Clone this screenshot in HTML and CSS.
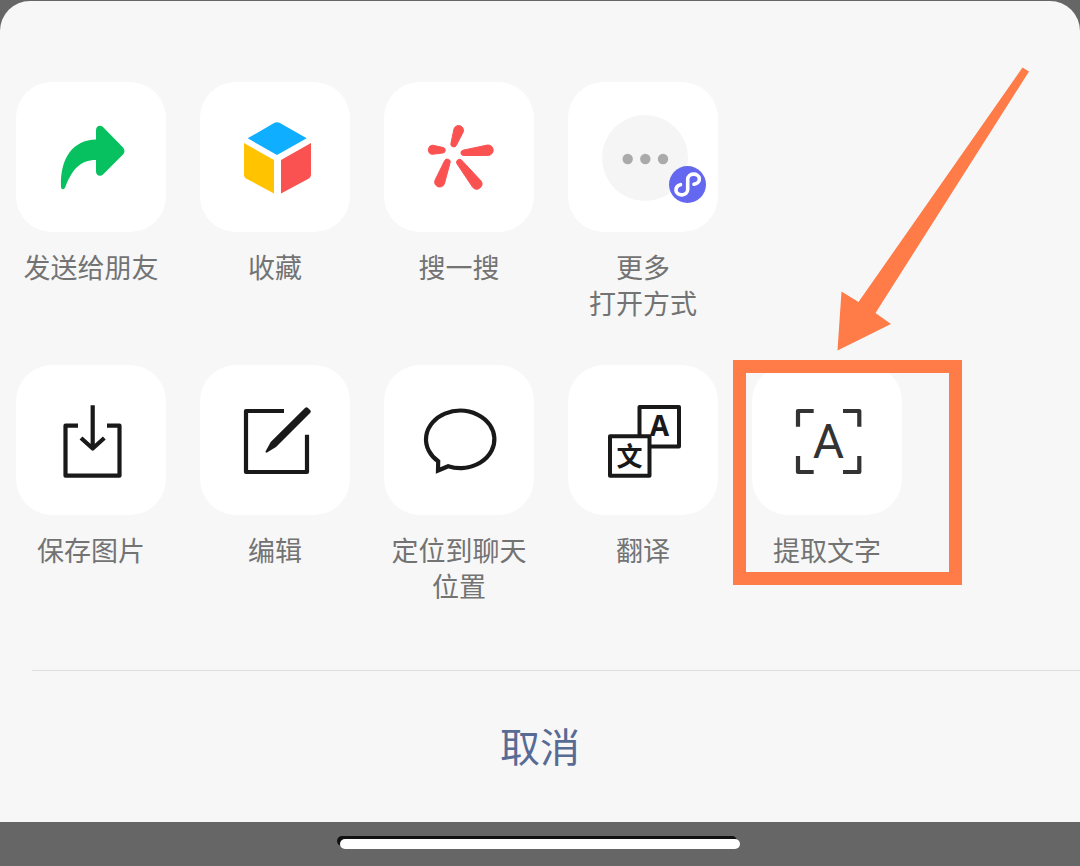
FILE: index.html
```html
<!DOCTYPE html>
<html lang="zh-CN">
<head>
    <meta charset="UTF-8">
    <meta name="viewport" content="width=device-width, initial-scale=1.0">
    <title>图片操作</title>
    <link rel="stylesheet" href="styles.css">
</head>
<body>

<main class="sheet">
    <div class="actions">
        <!-- Partage -->
        <div class="row">
            <button class="action" type="button">
                <span class="tile">
                    <svg viewBox="0 0 150 150" aria-hidden="true">
                        <path fill="#07c160" d="M80 57.500V48c0-4.300 4.500-5.500 7-3L107 65.500c2 2 2 5 0 7L87 92.500c-2.500 2.500-7 1.200-7-3V78C64 78 56 88 49.500 104.500C48.500 108 45 108 45 104.500C44 76 57 58 80 57.500Z"/>
                    </svg>
                </span>
                <span class="label">发送给朋友</span>
            </button>
            <button class="action" type="button">
                <span class="tile">
                    <svg viewBox="0 0 150 150" aria-hidden="true">
                        <path fill="#10aeff" d="M47.700 56.300L74.500 40.800q2.500-1.300 5 0L106.700 56.300L77 73Z"/>
                        <path fill="#ffc300" d="M44 61L74 78V111.500L46 96.500q-2-1.200-2-3.500Z"/>
                        <path fill="#fa5151" d="M81 78L111 61V92q0 3.500-3 5L81 111.500Z"/>
                    </svg>
                </span>
                <span class="label">收藏</span>
            </button>
            <button class="action" type="button">
                <span class="tile">
                    <svg viewBox="0 0 150 150" aria-hidden="true">
                        <g fill="#fa5151" stroke="#fa5151" stroke-linejoin="round">
                            <path d="M79.200 50A4.800 4.800 0 0 0 70 46.800L67 61A2.700 2.700 0 0 0 72.500 63Z"/>
                            <path d="M48 72.300A4.600 4.600 0 0 1 48.600 63.200L59.200 65.500A2.800 2.800 0 0 1 58.800 71Z"/>
                            <path d="M104.500 73.400A5.200 5.200 0 0 0 103.500 63L79 68.200A2.700 2.700 0 0 0 79.300 73.500Z"/>
                            <path d="M97.100 99A5.300 5.300 0 0 1 88.900 105.600L72.800 81.500A3 3 0 0 1 77.500 78Z"/>
                            <path d="M60.400 101.800A5 5 0 0 1 51 98.200L60.500 78.900A2.800 2.800 0 0 1 66 81.100Z"/>
                        </g>
                    </svg>
                </span>
                <span class="label">搜一搜</span>
            </button>
            <button class="action" type="button">
                <span class="tile">
                    <svg viewBox="0 0 150 150" aria-hidden="true">
                        <circle cx="77" cy="76" r="43" fill="#f5f5f5"/>
                        <g fill="#aaa">
                            <circle cx="59.700" cy="77" r="5.200"/>
                            <circle cx="77.300" cy="77" r="5.200"/>
                            <circle cx="95" cy="77" r="5.200"/>
                        </g>
                        <circle cx="119.500" cy="102.500" r="18.500" fill="#6467ef"/>
                        <path fill="none" stroke="#fff" stroke-width="3.600" stroke-linecap="round" d="M126 102.300C130 101.500 131.500 99 131.300 96.500C130.800 90.500 119.700 90.500 119.700 97.500V107.500C119.700 114.500 108.500 114.500 108 108.500C107.800 106 109.300 103.500 112.500 102.700"/>
                    </svg>
                </span>
                <span class="label">更多<br>打开方式</span>
            </button>
        </div>

        <!-- Outils -->
        <div class="row">
            <button class="action" type="button">
                <span class="tile">
                    <svg viewBox="0 0 150 150" aria-hidden="true">
                        <g fill="none" stroke="#191919" stroke-width="4.200" stroke-linejoin="round">
                            <path d="M62 60.700H49.500V110.700H103.500V60.700H91"/>
                            <path d="M76.700 40.300V83M65 73L76.700 83.500L88.300 73"/>
                        </g>
                    </svg>
                </span>
                <span class="label">保存图片</span>
            </button>
            <button class="action" type="button">
                <span class="tile">
                    <svg viewBox="0 0 150 150" aria-hidden="true">
                        <path fill="none" stroke="#191919" stroke-width="4.200" stroke-linejoin="round" d="M84 46H46V107H107V69.700"/>
                        <path fill="#191919" d="M65.500 86.500L70.700 77L105 43q1.500-1.500 3 0L110.300 45.300q1.200 1.200 0 2.500L76 82L67 87.500q-1.500.5-1.500-1Z"/>
                    </svg>
                </span>
                <span class="label">编辑</span>
            </button>
            <button class="action" type="button">
                <span class="tile">
                    <svg viewBox="0 0 150 150" aria-hidden="true">
                        <path fill="none" stroke="#191919" stroke-width="4.200" stroke-linejoin="miter" d="M64.200 101.200L54 105.500L54.200 96.300A34.200 28.700 0 1 1 64.200 101.200Z"/>
                    </svg>
                </span>
                <span class="label">定位到聊天位置</span>
            </button>
            <button class="action" type="button">
                <span class="tile">
                    <svg viewBox="0 0 150 150" aria-hidden="true">
                        <rect class="glyph-box" x="71.500" y="42" width="39.500" height="39.500"/>
                        <text class="glyph-latin" x="91.500" y="71">A</text>
                        <rect class="glyph-box" x="42" y="71.300" width="39.500" height="39.500"/>
                        <text class="glyph-han" x="61.500" y="101">文</text>
                    </svg>
                </span>
                <span class="label">翻译</span>
            </button>
            <div class="spotlight">
                <button class="action" type="button">
                    <span class="tile">
                        <svg viewBox="0 0 150 150" aria-hidden="true">
                            <path fill="none" stroke="#333" stroke-width="4.200" stroke-linejoin="round" d="M46 61.700V46H61.700M91 46H107.300V61.700M107.300 91V107H91M61.700 107H46V91"/>
                            <text class="glyph-scan" x="76.500" y="93">A</text>
                        </svg>
                    </span>
                    <span class="label">提取文字</span>
                </button>
                <!-- Cadre et flèche par-dessus le bouton -->
                <div class="marker"></div>
                <svg class="pointer" viewBox="0 0 194 284" aria-hidden="true">
                    <path fill="#ff7b47" d="M186.500 0.500L193 4.500L39.500 246L55 257L1.500 283.500L5.500 224.500L22.500 235Z"/>
                </svg>
            </div>
        </div>
    </div>

    <button class="cancel" type="button">取消</button>
</main>

<footer class="home-area">
    <div class="home-bar"></div>
</footer>

</body>
</html>
```

FILE: styles.css
```css
:root {
    --overlay: #666;
    --sheet-bg: #f7f7f7;
    --tile-bg: #fff;
    --label: #737373;
    --link: #576b95;
    --marker: #ff7b47;
    --icon: #191919;
}

* {
    box-sizing: border-box;
}

body {
    margin: 0;
    padding-top: 1px;
    min-height: 100vh;
    display: flex;
    flex-direction: column;
    background-color: var(--overlay);
    font-family: "Noto Sans CJK SC", sans-serif;
}

button {
    border: none;
    background: none;
    padding: 0;
    font-family: inherit;
    cursor: pointer;
}

/* Panneau */
.sheet {
    flex: 1;
    display: flex;
    flex-direction: column;
    background-color: var(--sheet-bg);
    border-radius: 30px 30px 0 0;
    overflow: hidden;
}

.actions {
    flex: 1;
    display: flex;
    flex-direction: column;
    gap: 43px;
    padding: 81px 16px 64px;
}

.row {
    display: flex;
    align-items: flex-start;
    gap: 34px;
    min-height: 240px;
}

.action {
    width: 150px;
    flex-shrink: 0;
    display: flex;
    flex-direction: column;
    gap: 17px;
}

.tile {
    display: block;
    width: 150px;
    height: 150px;
    border-radius: 36px;
    background-color: var(--tile-bg);
}

.tile svg {
    display: block;
    width: 100%;
    height: 100%;
}

.label {
    width: 100%;
    font-size: 27px;
    font-weight: 400;
    line-height: 36px;
    text-align: center;
    color: var(--label);
}

/* Lettres dans les icones */
.glyph-box {
    fill: var(--tile-bg);
    stroke: var(--icon);
    stroke-width: 4px;
    stroke-linejoin: round;
}

.glyph-latin,
.glyph-han,
.glyph-scan {
    text-anchor: middle;
    fill: var(--icon);
}

.glyph-latin {
    font-family: "Noto Sans", sans-serif;
    font-size: 28px;
    font-weight: bold;
}

.glyph-han {
    font-size: 26px;
    font-weight: bold;
}

.glyph-scan {
    font-family: Roboto, sans-serif;
    font-size: 48px;
    fill: #333;
}

/* Mise en avant */
.spotlight {
    position: relative;
}

.marker {
    position: absolute;
    top: -5px;
    left: -19px;
    width: 229px;
    height: 225px;
    border: 13px solid var(--marker);
    pointer-events: none;
}

.pointer {
    position: absolute;
    top: -298px;
    left: 84px;
    width: 194px;
    height: 284px;
    pointer-events: none;
}

/* Annuler */
.cancel {
    margin-left: 32px;
    padding: 44px 32px 47px 0;
    border-top: 1px solid #dedede;
    font-size: 40px;
    line-height: 60px;
    color: var(--link);
}

/* Barre du bas */
.home-area {
    display: flex;
    justify-content: center;
    padding: 17px 0;
}

.home-bar {
    width: 37%;
    height: 10px;
    border-radius: 5px;
    background-color: #fff;
    box-shadow: -3px -3px 0 #111;
}
```
